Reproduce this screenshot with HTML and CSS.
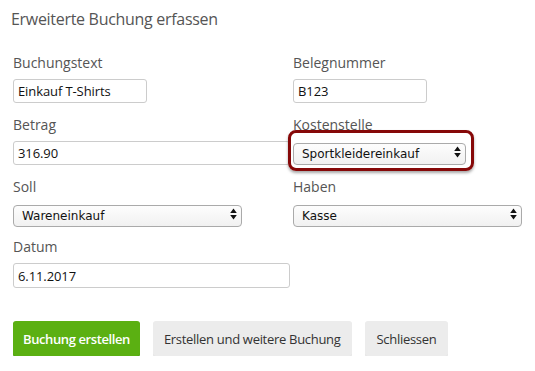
FILE: index.html
```html
<!DOCTYPE html>
<html lang="de">
<head>
<meta charset="utf-8">
<title>Erweiterte Buchung erfassen</title>
<link rel="stylesheet" href="styles.css">
</head>
<body>
<div class="dialog">
  <h1 class="title">Erweiterte Buchung erfassen</h1>
  <form class="form">
    <div class="field">
      <label class="label">Buchungstext</label>
      <input class="input w-short" type="text" value="Einkauf T-Shirts">
    </div>
    <div class="field">
      <label class="label">Belegnummer</label>
      <input class="input w-short" type="text" value="B123">
    </div>
    <div class="field">
      <label class="label">Betrag</label>
      <input class="input w-long" type="text" value="316.90">
    </div>
    <div class="field">
      <label class="label">Kostenstelle</label>
      <div class="select-wrap w-mid">
        <select class="select"><option>Sportkleidereinkauf</option></select>
        <svg class="arrows" width="7" height="12" viewBox="0 0 7 12"><path d="M3.5 0.5 L6.8 5 L0.2 5 Z M3.5 11.5 L6.8 7 L0.2 7 Z" fill="#111"/></svg>
        <span class="marker"></span>
      </div>
    </div>
    <div class="field">
      <label class="label">Soll</label>
      <div class="select-wrap w-sel">
        <select class="select"><option>Wareneinkauf</option></select>
        <svg class="arrows" width="7" height="12" viewBox="0 0 7 12"><path d="M3.5 0.5 L6.8 5 L0.2 5 Z M3.5 11.5 L6.8 7 L0.2 7 Z" fill="#111"/></svg>
      </div>
    </div>
    <div class="field">
      <label class="label">Haben</label>
      <div class="select-wrap w-sel">
        <select class="select"><option>Kasse</option></select>
        <svg class="arrows" width="7" height="12" viewBox="0 0 7 12"><path d="M3.5 0.5 L6.8 5 L0.2 5 Z M3.5 11.5 L6.8 7 L0.2 7 Z" fill="#111"/></svg>
      </div>
    </div>
    <div class="field">
      <label class="label">Datum</label>
      <input class="input w-long tall" type="text" value="6.11.2017">
    </div>
  </form>
  <div class="actions">
    <button class="btn btn-primary" type="button">Buchung erstellen</button>
    <button class="btn btn-wide" type="button">Erstellen und weitere Buchung</button>
    <button class="btn" type="button">Schliessen</button>
  </div>
</div>
</body>
</html>
```
FILE: styles.css
```css
* { box-sizing: border-box; }
html, body { margin: 0; padding: 0; background: #fff; }
body { font-family: "Open Sans", "Noto Sans", sans-serif; }

.dialog { padding: 8px 13px 0 13px; width: 535px; }

.title {
  margin: 0 0 0 -2px;
  font-size: 16px;
  font-weight: 400;
  letter-spacing: -0.3px;
  color: #555;
  line-height: 22px;
}

.form {
  margin-top: 23px;
  display: grid;
  grid-template-columns: 280px 229px;
  row-gap: 12px;
}

.field { display: flex; flex-direction: column; align-items: flex-start; gap: 6px; }

.label {
  font-size: 14px;
  line-height: 20px;
  color: #555;
}

.input {
  height: 24px;
  border: 1px solid #ccc;
  border-radius: 3px;
  padding: 0 4px;
  font-family: "Open Sans", sans-serif;
  font-size: 13px;
  letter-spacing: -0.1px;
  color: #111;
  background: #fff;
}
.input.tall { height: 25px; }
.w-short { width: 134px; }
.w-long { width: 277px; }
.w-mid { width: 173px; }
.w-sel { width: 229px; }

.select-wrap { position: relative; height: 22px; }
.select {
  appearance: none;
  -webkit-appearance: none;
  width: 100%;
  height: 22px;
  border: 1px solid #aaa;
  border-radius: 4px;
  background: linear-gradient(#fdfdfd, #f1f1f1);
  padding: 0 20px 0 8px;
  font-family: "DejaVu Sans", sans-serif;
  font-size: 12px;
  color: #111;
}
.arrows { position: absolute; right: 5px; top: 5px; pointer-events: none; }

.marker {
  position: absolute;
  left: -5px;
  right: -8px;
  top: -11px;
  bottom: -8px;
  border: 3px solid #860808;
  border-radius: 8px;
  box-shadow: 0 2px 3px rgba(0,0,0,0.35);
  pointer-events: none;
}

.actions {
  margin-top: 33px;
  display: flex;
  gap: 13px;
}
.btn {
  height: 35px;
  border: none;
  border-radius: 3px;
  padding: 0 12px;
  background: #ececec;
  color: #333;
  font-family: "Open Sans", sans-serif;
  font-size: 13px;
  letter-spacing: -0.3px;
  box-shadow: 0 1px 0 #e0e0e0;
}
.btn-wide { padding: 0 11px; }
.btn-primary {
  background: #5bb012;
  color: #fff;
  font-weight: 600;
  letter-spacing: -0.4px;
  padding: 0 10px;
  box-shadow: 0 1px 0 #4a9510;
}
```
